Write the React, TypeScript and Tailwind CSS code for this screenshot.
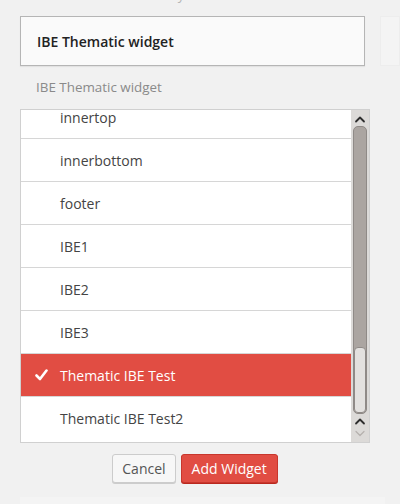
import React from "react";

const ITEMS = [
  "innertop",
  "innerbottom",
  "footer",
  "IBE1",
  "IBE2",
  "IBE3",
  "Thematic IBE Test",
  "Thematic IBE Test2",
];

const SELECTED = "Thematic IBE Test";

function Chevron({ up, faded }: { up?: boolean; faded?: boolean }) {
  return (
    <svg width="12" height="8" viewBox="0 0 12 8" className="block">
      <polyline
        points={up ? "2,6.5 6,2.5 10,6.5" : "2,1.5 6,5.5 10,1.5"}
        fill="none"
        stroke={faded ? "#b5b1ae" : "#2e2e2e"}
        strokeWidth={faded ? 1.2 : 1.8}
        strokeLinecap="round"
        strokeLinejoin="round"
      />
    </svg>
  );
}

function CheckMark() {
  return (
    <svg width="13" height="12" viewBox="0 0 13 12" className="block">
      <path d="M1.5 6.5 L5 10 L11.5 1.5" fill="none" stroke="#fff" strokeWidth="2.6" strokeLinecap="round" strokeLinejoin="round" />
    </svg>
  );
}

function Scrollbar() {
  return (
    <div className="w-[18px] shrink-0 bg-[#dcdad8] flex flex-col items-center">
      <div className="h-[16px] flex items-center justify-center pt-[1px]">
        <Chevron up />
      </div>
      <div className="w-[14px] h-[288px] rounded-[5px] border border-[#8f8a87] bg-[#aba5a1] flex flex-col justify-end">
        <div className="h-[66px] rounded-[4px] border border-[#8f8a87] bg-[#e3e1df]" />
      </div>
      <div className="h-[14px] flex items-center justify-center">
        <Chevron up />
      </div>
      <div className="h-[12px] flex items-center justify-center">
        <Chevron faded />
      </div>
    </div>
  );
}

export default function App() {
  return (
    <div
      className="w-[400px] h-[504px] bg-[#f1f1f1] overflow-hidden"
      style={{ fontFamily: '"Open Sans", "Noto Sans", sans-serif' }}
    >
      <p className="-mt-[15px] h-[20px] pl-[37px] text-[13px] leading-[20px] text-[#b4b4b4]">
        Add a custom menu to your sidebar.
      </p>

      <div className="mt-[11px] flex">
        <div className="ml-[20px] w-[350px] h-[50px] border border-[#b5b5b5] bg-[#fafafa] shadow-[0_1px_1px_rgba(0,0,0,0.06)] flex items-center pl-[16px]">
          <span className="text-[14px] font-semibold text-[#222]">IBE Thematic widget</span>
        </div>
        <div className="ml-[15px] w-[20px] h-[50px] bg-[#f4f4f4] border border-[#ededed]" />
      </div>

      <div className="h-[43px] flex items-center pl-[36px] text-[13.4px] text-[#8a8a8a]">
        IBE Thematic widget
      </div>

      <div className="ml-[20px] w-[350px] h-[334px] border border-[#d0d0d0] bg-white flex overflow-hidden">
        <div className="flex-1 overflow-hidden">
          <div className="-mt-[14px] divide-y divide-[#d6d6d6]">
            {ITEMS.map((item) => {
              const sel = item === SELECTED;
              return (
                <div
                  key={item}
                  className={`h-[43px] flex items-center text-[14px] ${sel ? "bg-[#e14d43] text-white" : "text-[#444]"}`}
                >
                  <div className="w-[39px] pl-[14px] flex items-center">{sel && <CheckMark />}</div>
                  <span>{item}</span>
                </div>
              );
            })}
          </div>
        </div>
        <Scrollbar />
      </div>

      <div className="mt-[11px] ml-[20px] w-[350px] flex justify-center gap-[5px]">
        <button className="h-[29px] px-[9px] rounded-[3px] border border-[#cccccc] bg-[#f7f7f7] text-[14px] text-[#555] shadow-[0_1px_0_#ccc]">
          Cancel
        </button>
        <button className="h-[29px] px-[10px] rounded-[3px] border border-[#c8372d] bg-[#e14d43] text-[14px] text-white shadow-[0_1px_0_#ba281e]">
          Add Widget
        </button>
      </div>

      <div className="mt-[14px] ml-[20px] w-[365px] h-[20px] bg-[#f4f4f4]" />
    </div>
  );
}
